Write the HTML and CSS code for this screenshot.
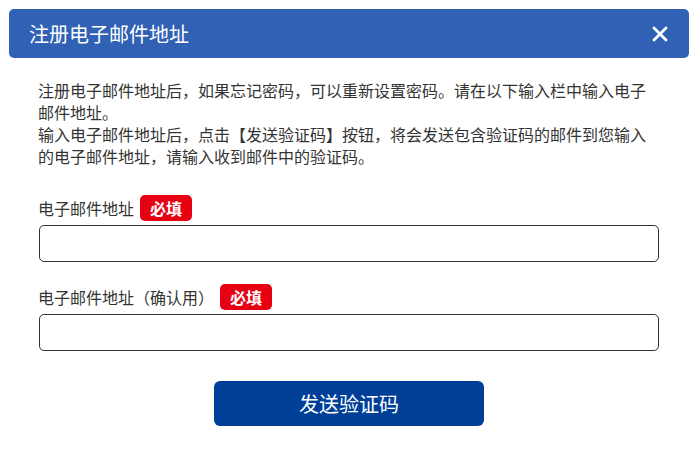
FILE: index.html
```html
<!DOCTYPE html>
<html lang="zh-CN">
<head>
<meta charset="utf-8">
<title>注册电子邮件地址</title>
<link rel="stylesheet" href="styles.css">
</head>
<body>
<div class="dialog">
  <div class="header">
    <h1 class="title">注册电子邮件地址</h1>
    <button class="close" aria-label="关闭">
      <svg width="16" height="16" viewBox="0 0 16 16"><path d="M2 2L14 14M14 2L2 14" stroke="#fff" stroke-width="2.8" stroke-linecap="round"/></svg>
    </button>
  </div>
  <div class="body">
    <p class="desc">注册电子邮件地址后，如果忘记密码，可以重新设置密码。请在以下输入栏中输入电子邮件地址。<br>输入电子邮件地址后，点击【发送验证码】按钮，将会发送包含验证码的邮件到您输入的电子邮件地址，请输入收到邮件中的验证码。</p>
    <div class="field">
      <div class="label-row"><span class="label">电子邮件地址</span><span class="badge">必填</span></div>
      <input class="input" type="email">
    </div>
    <div class="field field-2">
      <div class="label-row"><span class="label">电子邮件地址（确认用）</span><span class="badge">必填</span></div>
      <input class="input" type="email">
    </div>
    <div class="actions">
      <button class="submit">发送验证码</button>
    </div>
  </div>
</div>
</body>
</html>
```
FILE: styles.css
```css
* { box-sizing: border-box; }
html, body { margin: 0; padding: 0; background: #fff; }
body {
  font-family: "Noto Sans CJK SC", "Noto Sans", sans-serif;
  color: #333;
}
.dialog {
  padding: 9px 8px 0 9px;
}
.header {
  height: 49px;
  background: #3061b5;
  border-radius: 5px;
  display: flex;
  align-items: center;
  justify-content: space-between;
  padding: 0 21px 0 20px;
}
.title {
  margin: 0;
  font-size: 20px;
  font-weight: 400;
  color: #fff;
  line-height: 26px;
}
.close {
  background: none;
  border: 0;
  padding: 0;
  width: 16px;
  height: 16px;
  display: flex;
  cursor: pointer;
}
.body {
  padding: 21px 31px 0 29px;
}
.desc {
  margin: 0;
  font-size: 16px;
  line-height: 22px;
  color: #333;
}
.field { margin-top: 28px; }
.field-2 { margin-top: 22px; }
.label-row {
  display: flex;
  align-items: center;
  height: 26px;
  margin-bottom: 4px;
}
.label {
  font-size: 16px;
  line-height: 26px;
  color: #333;
}
.badge {
  margin-left: 6px;
  background: #e60012;
  color: #fff;
  font-size: 16px;
  font-weight: 700;
  line-height: 26px;
  height: 26px;
  padding: 0 10px;
  border-radius: 5px;
}
.input {
  display: block;
  width: 100%;
  height: 37px;
  border: 1px solid #333;
  border-radius: 5px;
  background: #fff;
  margin-left: 1px;
}
.actions {
  display: flex;
  justify-content: center;
  margin-top: 30px;
}
.submit {
  width: 270px;
  height: 45px;
  background: #003f98;
  color: #fff;
  border: 0;
  border-radius: 6px;
  font-family: "Noto Sans CJK SC", sans-serif;
  font-size: 20px;
  margin-left: 2px;
}
```
